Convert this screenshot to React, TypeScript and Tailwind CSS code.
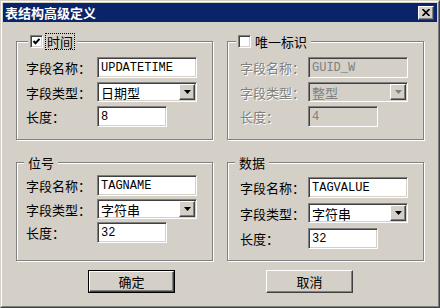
import React from "react";

const cjk = "font-['Noto_Sans_CJK_SC',sans-serif]";
const mono = "font-['Liberation_Mono',monospace]";

const sunken =
  "border border-t-[#808080] border-l-[#808080] border-b-white border-r-white shadow-[inset_1px_1px_0_#404040,inset_-1px_-1px_0_#d4d0c8]";
const raised =
  "border border-t-white border-l-white border-b-[#404040] border-r-[#404040] shadow-[inset_-1px_-1px_0_#808080]";
const etched = "border border-[#808080] shadow-[inset_1px_1px_0_#fff,1px_1px_0_#fff]";

function Label({ text, disabled, w }: { text: string; disabled?: boolean; w: string }) {
  return (
    <span
      className={`${w} shrink-0 whitespace-nowrap text-[13px] leading-none ${cjk} ${
        disabled ? "text-[#808080] [text-shadow:1px_1px_0_#fff]" : "text-black"
      }`}
    >
      {text}
    </span>
  );
}

function TextBox({ value, disabled, w }: { value: string; disabled?: boolean; w: string }) {
  return (
    <div
      className={`${w} h-[21px] ${sunken} ${
        disabled ? "bg-[#d4d0c8] text-[#808080]" : "bg-white text-black"
      } flex items-center pl-[3px] text-[12px] ${mono}`}
    >
      {value}
    </div>
  );
}

function Combo({ value, disabled }: { value: string; disabled?: boolean }) {
  return (
    <div
      className={`w-[100px] h-[20px] ${sunken} ${
        disabled ? "bg-[#d4d0c8] text-[#808080]" : "bg-white text-black"
      } flex items-center justify-between pl-[3px] pr-[1px]`}
    >
      <span className={`text-[13px] leading-none ${cjk}`}>{value}</span>
      <div className={`w-[16px] h-[16px] bg-[#d4d0c8] ${raised} flex items-center justify-center`}>
        <svg width="7" height="4" viewBox="0 0 7 4">
          <path d="M0 0H7L3.5 4Z" fill={disabled ? "#808080" : "#000"} />
        </svg>
      </div>
    </div>
  );
}

function CheckBox({ checked }: { checked?: boolean }) {
  return (
    <div className={`w-[13px] h-[13px] bg-white ${sunken} flex items-center justify-center`}>
      {checked && (
        <svg width="9" height="9" viewBox="0 0 9 9">
          <path d="M1.5 4 L3.5 6.2 L7.5 1.8" stroke="#000" strokeWidth="2" fill="none" />
        </svg>
      )}
    </div>
  );
}

type Field = { name: string; type: string; len: string };

function Group({
  title,
  check,
  checked,
  disabled,
  data,
  left,
  pt,
  gap,
}: {
  title: string;
  check?: boolean;
  checked?: boolean;
  disabled?: boolean;
  data: Field;
  left?: boolean;
  pt: string;
  gap: string;
}) {
  const lw = left ? "w-[71px]" : "w-[68px]";
  return (
    <div className={`relative h-[99px] ${etched} ${left ? "pl-[9px]" : "pl-[12px]"} ${pt}`}>
      <div
        className={`absolute top-[-9px] ${
          check ? (left ? "left-[11px]" : "left-[8px]") : "left-[7px]"
        } bg-[#d4d0c8] px-[2px] flex items-center gap-[2px] h-[17px]`}
      >
        {check && <CheckBox checked={checked} />}
        <span
          className={`text-[13px] leading-none ${cjk} text-black px-[1px] py-[1px] ${
            checked ? "border border-dotted border-black" : "border border-transparent"
          }`}
        >
          {title}
        </span>
      </div>
      <div className={`flex flex-col ${gap}`}>
        <div className="flex items-center">
          <Label text="字段名称：" disabled={disabled} w={lw} />
          <TextBox value={data.name} disabled={disabled} w="w-[100px]" />
        </div>
        <div className="flex items-center">
          <Label text="字段类型：" disabled={disabled} w={lw} />
          <Combo value={data.type} disabled={disabled} />
        </div>
        <div className="flex items-center">
          <Label text="长度：" disabled={disabled} w={lw} />
          <TextBox value={data.len} disabled={disabled} w="w-[70px]" />
        </div>
      </div>
    </div>
  );
}

function Button({ text, isDefault }: { text: string; isDefault?: boolean }) {
  const inner = (
    <div
      className={`w-full h-full bg-[#d4d0c8] ${raised} flex items-center justify-center text-[13px] ${cjk} text-black`}
    >
      {text}
    </div>
  );
  return isDefault ? (
    <div className="w-[87px] h-[23px] border border-black">{inner}</div>
  ) : (
    <div className="w-[87px] h-[23px]">{inner}</div>
  );
}

export default function App() {
  return (
    <div className="w-[440px] h-[308px] bg-[#d4d0c8] border border-t-[#d4d0c8] border-l-[#d4d0c8] border-b-[#404040] border-r-[#404040]">
      <div className="h-full border border-t-white border-l-white border-b-[#808080] border-r-[#808080] p-[1px]">
        <div className="h-[19px] bg-[#0a246a] flex items-center justify-between pl-[2px] pr-[3px]">
          <span className={`text-white font-bold text-[13px] leading-none ${cjk}`}>表结构高级定义</span>
          <div className={`w-[16px] h-[14px] bg-[#d4d0c8] ${raised} flex items-center justify-center`}>
            <svg width="8" height="7" viewBox="0 0 8 7">
              <path d="M0.5 0 L7.5 7 M7.5 0 L0.5 7" stroke="#000" strokeWidth="1.6" />
            </svg>
          </div>
        </div>
        <div className="pt-[19px] pl-[13px]">
          <div className="grid grid-cols-[197px_197px] gap-x-[14px] gap-y-[22px]">
            <Group
              title="时间"
              check
              checked
              left
              pt="pt-[15px]"
              gap="gap-[4px]"
              data={{ name: "UPDATETIME", type: "日期型", len: "8" }}
            />
            <Group
              title="唯一标识"
              check
              disabled
              pt="pt-[15px]"
              gap="gap-[4px]"
              data={{ name: "GUID_W", type: "整型", len: "4" }}
            />
            <Group
              title="位号"
              left
              pt="pt-[12px]"
              gap="gap-[3px]"
              data={{ name: "TAGNAME", type: "字符串", len: "32" }}
            />
            <Group
              title="数据"
              pt="pt-[14px]"
              gap="gap-[5px]"
              data={{ name: "TAGVALUE", type: "字符串", len: "32" }}
            />
          </div>
          <div className="mt-[9px] flex pl-[72px] gap-[91px]">
            <Button text="确定" isDefault />
            <Button text="取消" />
          </div>
        </div>
      </div>
    </div>
  );
}
